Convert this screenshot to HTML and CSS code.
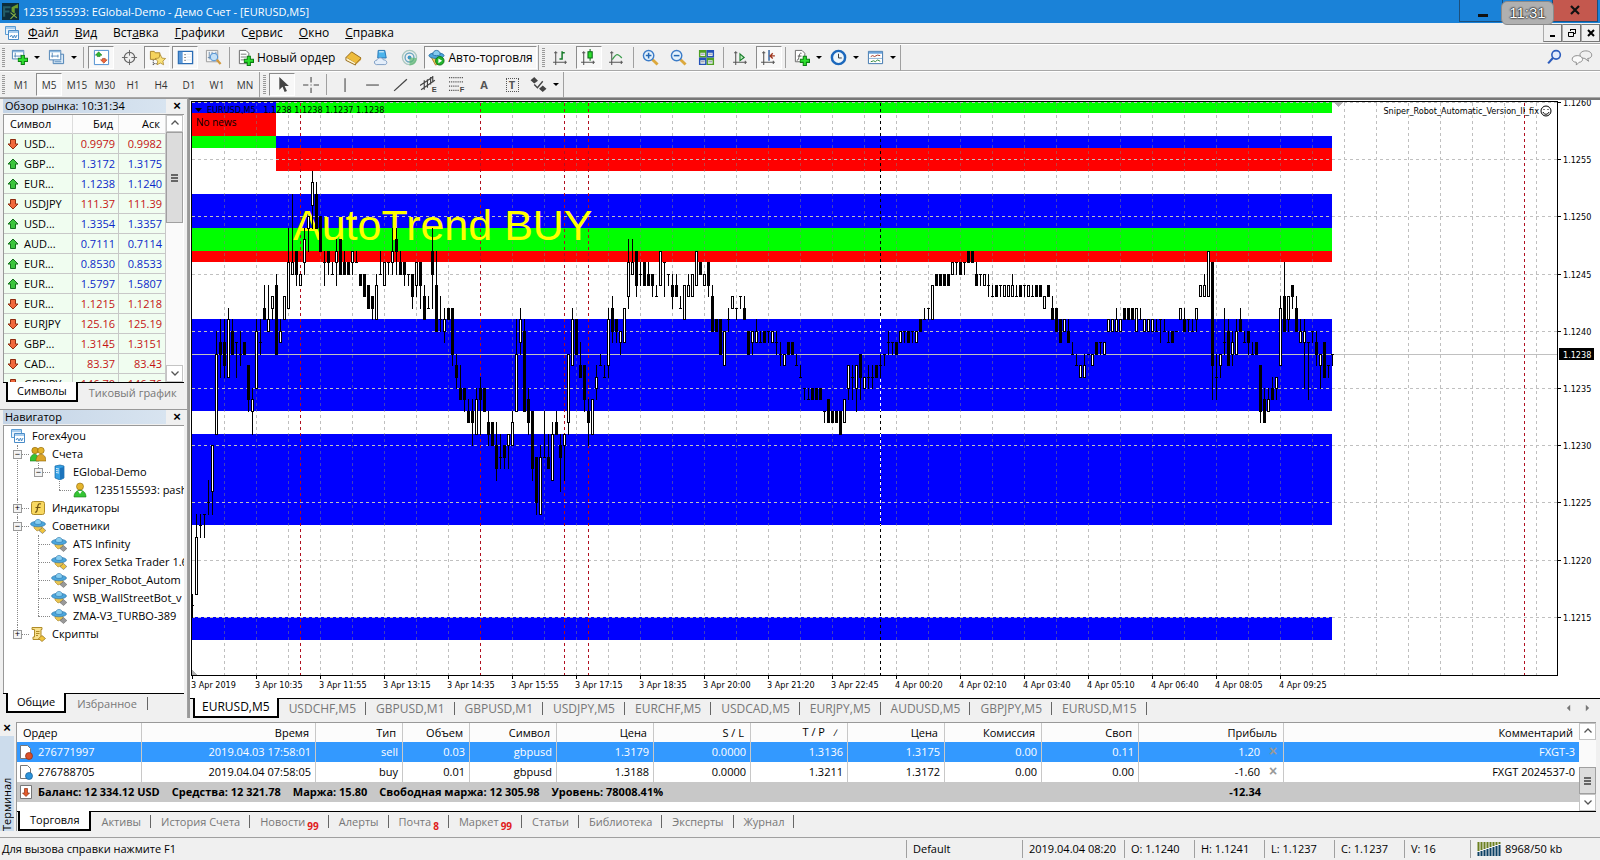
FILE: index.html
```html
<!DOCTYPE html>
<html lang="ru">
<head>
  <meta charset="UTF-8">
  <meta name="viewport" content="width=device-width, initial-scale=1.0">
  <title>1235155593: EGlobal-Demo - Демо Счет - [EURUSD,M5]</title>
  <link rel="stylesheet" href="styles.css">
</head>
<body>

  <!-- shared icons -->
  <svg class="sprite" aria-hidden="true">
    <symbol id="i-up" viewBox="0 0 12 12"><path d="M6 1l5 5H8.500v4.500h-5V6H1z" fill="#3cc43c" stroke="#14701c"/></symbol>
    <symbol id="i-down" viewBox="0 0 12 12"><path d="M6 11L1 6h2.500V1.500h5V6H11z" fill="#f0683c" stroke="#8c2c10"/></symbol>
    <symbol id="i-charts" viewBox="0 0 16 16"><path d="M1.500 1.500h10v8h-10z" fill="#e8f3fc" stroke="#5a9cd4"/><path d="M2 2h9v2H2z" fill="#a8cdee"/><path d="M4.500 5.500h10v9h-10z" fill="#fff" stroke="#4a8cc8"/><path d="M5 6h9v2H5z" fill="#a8cdee"/><path d="M6 12l1.500-2L9 13l1.500-3 1 3 1.500-3" fill="none" stroke="#4a8cc8"/></symbol>
    <symbol id="i-expert" viewBox="0 0 16 16"><path d="M4 7l8 0 0 4-5 2-3-3z" fill="#e9c450" stroke="#a5832a" stroke-width=".6"/><ellipse cx="8" cy="6" rx="7.500" ry="2.800" fill="#4ba6dc" stroke="#2a72a8" stroke-width=".6"/><path d="M4.500 5.500C4.500 0 11.500 0 11.500 5.500 9.500 6.800 6.500 6.800 4.500 5.500z" fill="#86cdf0" stroke="#2a72a8" stroke-width=".6"/><path d="M9 12.500l3.500-3 3.300 3-3.300 3z" fill="currentColor" stroke="#666" stroke-width=".6"/></symbol>
    <symbol id="i-plus" viewBox="0 0 10 10"><path d="M3.500.5h3v3h3v3h-3v3h-3v-3h-3v-3h3z" fill="#2ee02e" stroke="#0b7d12"/></symbol>
    <symbol id="i-axes" viewBox="0 0 16 16"><path d="M3.500 2v13M1 12.500h13M2 3.500h3M12.500 11v3" fill="none" stroke="#555"/></symbol>
    <symbol id="i-chev-up" viewBox="0 0 10 10"><path d="M1.500 6.500L5 3l3.500 3.500" fill="none" stroke="#555" stroke-width="1.300"/></symbol>
    <symbol id="i-chev-down" viewBox="0 0 10 10"><path d="M1.500 3.500L5 7l3.500-3.500" fill="none" stroke="#555" stroke-width="1.300"/></symbol>
  </svg>

  <header class="titlebar">
    <svg class="logo" viewBox="0 0 16 16"><path d="M0 0h16v16H0z" fill="#0c2c3c"/><path d="M1 3h7v2H3v2h4v2H3v4H1z" fill="#245c68"/><path d="M9 4l6-3v4h-3v5l-3-2z" fill="#6c9c30"/><path d="M8 9l6 5M13 10l-5 5" stroke="#8cb444"/></svg>
    <h1>1235155593: EGlobal-Demo - Демо Счет - [EURUSD,M5]</h1>
    <button class="win-min" aria-label="Свернуть"></button>
    <span class="clock">11:31</span>
    <button class="win-close" aria-label="Закрыть"><svg viewBox="0 0 10 10"><path d="M1 1l8 8M9 1L1 9" stroke="#111" stroke-width="2.200"/></svg></button>
  </header>

  <nav class="menubar">
    <svg class="ico"><use href="#i-charts"/></svg>
    <button><u>Ф</u>айл</button>
    <button><u>В</u>ид</button>
    <button>Вст<u>а</u>вка</button>
    <button><u>Г</u>рафики</button>
    <button>С<u>е</u>рвис</button>
    <button><u>О</u>кно</button>
    <button><u>С</u>правка</button>
    <div class="mdi">
      <button aria-label="Свернуть окно"><svg viewBox="0 0 10 10"><path d="M2 8h5" stroke="#000" stroke-width="2"/></svg></button>
      <button aria-label="Восстановить"><svg viewBox="0 0 10 10"><path d="M3.500 3V1.500h5v4H7M1.500 4.500h5v4h-5zM3 1.500h6M1 4.500h6" fill="none" stroke="#000"/></svg></button>
      <button aria-label="Закрыть окно"><svg viewBox="0 0 10 10"><path d="M2 2l6 6M8 2L2 8" stroke="#000" stroke-width="2"/></svg></button>
    </div>
  </nav>

  <div class="toolbar">
    <i class="grip"></i>
    <button class="tool drop" aria-label="Новый график"><svg viewBox="0 0 18 18"><path d="M1.500 1.500h12v9h-12z" fill="#fff" stroke="#4a80b4"/><path d="M2 2h11v1.500H2z" fill="#8cb8e0"/><path d="M4.500 4v5M3 7.500h8M10.500 6v3" stroke="#5a8cbc" fill="none"/><use href="#i-plus" x="7" y="6" width="11" height="11"/></svg></button>
    <button class="tool drop" aria-label="Профили"><svg viewBox="0 0 18 18"><path d="M5.500 5.500h11v10h-11z" fill="#d8e8f6" stroke="#4a80b4"/><path d="M1.500 1.500h12v10h-12z" fill="#fff" stroke="#4a80b4"/><path d="M2 2h11v1.500H2z" fill="#8cb8e0"/><path d="M4.500 4v5M3 7.500h8M10.500 6v3M7 13.500h7" stroke="#5a8cbc" fill="none"/></svg></button>
    <i class="sep"></i>
    <button class="tool on" aria-label="Обзор рынка"><svg viewBox="0 0 18 18"><path d="M1.500 1.500h15v15h-15z" fill="#fff" stroke="#4a8cd0"/><path d="M6 3l3.500 3.500H7.500V8h-3V6.500h-2z" fill="#2eb82e" stroke="#14701c" stroke-width=".6"/><path d="M11.500 15L8 11.500h2V10h3v1.500h2z" fill="#f0683c" stroke="#a03010" stroke-width=".6"/></svg></button>
    <button class="tool" aria-label="Окно данных"><svg viewBox="0 0 18 18"><circle cx="9" cy="9" r="5.500" fill="none" stroke="#666" stroke-width="1.300"/><path d="M9 1v6M9 11v6M1 9h6M11 9h6" stroke="#666"/></svg></button>
    <button class="tool on" aria-label="Навигатор"><svg viewBox="0 0 18 18"><path d="M1.500 2.500h4l1 1.500h5v7h-10z" fill="#f5d35c" stroke="#a8842a"/><path d="M4.500 12v5M5 15.500h3" stroke="#111" stroke-dasharray="1 1"/><path d="M12 6l1.700 3.600 3.900.5-2.900 2.700.8 3.900-3.500-1.900-3.500 1.900.8-3.900L6.400 10.100l3.900-.5z" fill="#fae27a" stroke="#a8842a" stroke-width=".8"/></svg></button>
    <button class="tool on" aria-label="Терминал"><svg viewBox="0 0 18 18"><path d="M1.500 2.500h15v13h-15z" fill="#fff" stroke="#2a6cb4" stroke-width="1.400"/><path d="M2 3h4v12H2z" fill="#5a98d8"/><path d="M8 6h1M8 9h1M8 12h1" stroke="#111"/><path d="M10 5.500h5M10 8.500h5M10 11.500h5" stroke="#dce8f4"/></svg></button>
    <button class="tool" aria-label="Тестер стратегий"><svg viewBox="0 0 18 18"><path d="M1.500 1.500h12v12h-12z" fill="#f4f4f4" stroke="#999"/><path d="M4.500 3v8M3 9h4M7.500 3v4M11.500 3v3" stroke="#6c8cac"/><circle cx="9.500" cy="8.500" r="4" fill="#c4e0f6" stroke="#4a8cd0"/><path d="M12.500 11.500l4 4.500" stroke="#d0983c" stroke-width="2.400"/></svg></button>
    <i class="sep"></i>
    <button class="tool text"><svg viewBox="0 0 18 18"><path d="M2.500 1.500h7l3 3v11h-10z" fill="#fff" stroke="#666"/><path d="M4 5.500h6M4 8.500h6M4 11.500h4" stroke="#777"/><use href="#i-plus" x="7" y="7" width="11" height="11"/></svg>Новый ордер</button>
    <button class="tool" aria-label="MetaEditor"><svg viewBox="0 0 18 18"><path d="M1 9l6-6 10 6.500-5.500 6z" fill="#eebc3c" stroke="#94681a"/><path d="M1 9v3l10 5 .5-2" fill="#fff2c4" stroke="#94681a"/><path d="M11.500 15.500L17 9.500v2L11 17z" fill="#c8922a"/></svg></button>
    <button class="tool" aria-label="MQL5"><svg viewBox="0 0 18 18"><path d="M5.500 1.500h7l1.500 8h-9z" fill="#4cb4ec" stroke="#2474b4"/><path d="M6.500 3h5" stroke="#fff"/><path d="M3.500 16.500c-3-.5-2.500-5 .5-4.500 1-3.500 6-3.500 7-.5 4-.5 5 5 1.500 5z" fill="#e4eefa" stroke="#7c9cc4"/></svg></button>
    <button class="tool" aria-label="Сигналы"><svg viewBox="0 0 18 18"><circle cx="9" cy="9" r="7.500" fill="none" stroke="#a8c8c0" stroke-width="1.400"/><circle cx="9" cy="9" r="4.700" fill="none" stroke="#6ca8c0" stroke-width="1.500"/><circle cx="9" cy="9" r="2" fill="#3c94c8"/><path d="M9 9v8.500c5-.5 8-3 7.500-8z" fill="#5cb870" opacity=".7"/></svg></button>
    <button class="tool text on"><svg viewBox="0 0 18 18"><path d="M3 8h12l-2 7-5 2z" fill="#ecca54" stroke="#a5832a"/><ellipse cx="9" cy="7" rx="8" ry="3" fill="#4ba6dc" stroke="#2a72a8"/><path d="M5 6c0-6 8-6 8 0-2 1.500-6 1.500-8 0z" fill="#86cdf0" stroke="#2a72a8"/><circle cx="12.500" cy="12.500" r="4.500" fill="#22b42c" stroke="#0c7414"/><path d="M11 10l4 2.500-4 2.500z" fill="#fff"/></svg>Авто-торговля</button>
    <i class="sep edge"></i>
    <i class="grip"></i>
    <button class="tool" aria-label="Бары"><svg viewBox="0 0 16 16"><use href="#i-axes"/><path d="M9.500 2v8M10 3.500h2M7 9.500h2" stroke="#157a28" stroke-width="1.400"/></svg></button>
    <button class="tool on" aria-label="Японские свечи"><svg viewBox="0 0 16 16"><use href="#i-axes"/><path d="M9.500 0v11" stroke="#0b6b18"/><path d="M7.500 2.500h4v6h-4z" fill="#2ee02e" stroke="#0b6b18"/></svg></button>
    <button class="tool" aria-label="Линия"><svg viewBox="0 0 16 16"><use href="#i-axes"/><path d="M4 10C8 4 9 4 13 8.500" fill="none" stroke="#3c9c4c" stroke-width="1.200"/></svg></button>
    <i class="sep"></i>
    <button class="tool" aria-label="Приблизить"><svg viewBox="0 0 18 18"><path d="M11 11l5.500 5.500" stroke="#dca83c" stroke-width="3"/><circle cx="7" cy="7" r="5.500" fill="#e4f2fc" stroke="#3c7cc8" stroke-width="1.500"/><path d="M4 7h6M7 4v6" stroke="#2468b4" stroke-width="1.600"/></svg></button>
    <button class="tool" aria-label="Отдалить"><svg viewBox="0 0 18 18"><path d="M11 11l5.500 5.500" stroke="#dca83c" stroke-width="3"/><circle cx="7" cy="7" r="5.500" fill="#e4f2fc" stroke="#3c7cc8" stroke-width="1.500"/><path d="M4 7h6" stroke="#2468b4" stroke-width="1.600"/></svg></button>
    <button class="tool" aria-label="Окна мозаикой"><svg viewBox="0 0 18 18"><path d="M1 1h8v8H1zM9 9h8v8H9z" fill="#4ea024"/><path d="M9 1h8v8H9zM1 9h8v8H1z" fill="#2452b8"/><path d="M2.500 4h5v3.500h-5zM10.500 4h5v3.500h-5zM2.500 12h5v3.500h-5zM10.500 12h5v3.500h-5z" fill="#e8f0e8"/><path d="M3 5.500h4M11 5.500h4M3 13.500h4M11 13.500h4" stroke="#88a"/></svg></button>
    <i class="sep"></i>
    <button class="tool" aria-label="Автопрокрутка"><svg viewBox="0 0 16 16"><use href="#i-axes"/><path d="M7.500 4.500l4 3.500-4 3z" fill="#b8ecb8" stroke="#157a28"/></svg></button>
    <button class="tool on" aria-label="Сдвиг графика"><svg viewBox="0 0 16 16"><use href="#i-axes"/><path d="M8.500 1v10" stroke="#24589c" stroke-width="1.300"/><path d="M14 6.500h-4M12 4l-2.500 2.500L12 9" fill="none" stroke="#a03820" stroke-width="1.300"/></svg></button>
    <i class="sep"></i>
    <button class="tool drop" aria-label="Индикаторы"><svg viewBox="0 0 18 18"><path d="M2.500 1.500h7l3 3v9h-10z" fill="#fff" stroke="#666"/><path d="M9 4.500c-2-.5-2 1-2.500 3S6 12 4 12M5 7.500h4" fill="none" stroke="#555"/><use href="#i-plus" x="7" y="7" width="11" height="11"/></svg></button>
    <button class="tool drop" aria-label="Периоды"><svg viewBox="0 0 18 18"><circle cx="9" cy="9" r="7" fill="#eef6fc" stroke="#1c68bc" stroke-width="2.600"/><path d="M9 5v4.500h3.500" fill="none" stroke="#333"/></svg></button>
    <button class="tool drop" aria-label="Шаблоны"><svg viewBox="0 0 18 18"><path d="M1.500 2.500h15v13h-15z" fill="#fff" stroke="#3c74ac"/><path d="M2 3h14v2H2z" fill="#6ca4dc"/><path d="M2 10h14" stroke="#8cb0d4"/><path d="M4 8l2-1 2 1 3-1.500 3 .5" fill="none" stroke="#9c3424"/><path d="M4 13.500l3-1 2 1 2-2 3 1.500" fill="none" stroke="#2c8434"/></svg></button>
    <i class="sep edge"></i>
    <div class="tool-right">
      <button class="tool" aria-label="Поиск"><svg viewBox="0 0 16 16"><circle cx="9.500" cy="5.500" r="4" fill="#e4ecfc" stroke="#2c5cbc" stroke-width="1.500"/><path d="M6.500 8.500L2 13.500" stroke="#2c5cbc" stroke-width="2"/></svg></button>
      <button class="tool" aria-label="Чат"><svg class="wide" viewBox="0 0 22 18"><path d="M15 2c8 0 8 8 2 8l1 3-4-3c-7 0-7-8 1-8z" fill="#f0f0f0" stroke="#888"/><path d="M6 7c7 0 7 7 2 7l-3 3v-3c-6 0-6-7 1-7z" fill="#fafafa" stroke="#888"/></svg></button>
    </div>
  </div>

  <div class="toolbar">
    <i class="grip"></i>
    <button class="tool period">M1</button>
    <button class="tool period on">M5</button>
    <button class="tool period">M15</button>
    <button class="tool period">M30</button>
    <button class="tool period">H1</button>
    <button class="tool period">H4</button>
    <button class="tool period">D1</button>
    <button class="tool period">W1</button>
    <button class="tool period">MN</button>
    <i class="sep edge"></i>
    <i class="grip"></i>
    <button class="tool on" aria-label="Курсор"><svg viewBox="0 0 16 16"><path d="M5 1v12l3-3 2 5 2.200-1-2.200-4.500h4z" fill="#444"/></svg></button>
    <button class="tool" aria-label="Перекрестие"><svg viewBox="0 0 16 16"><path d="M8.500 1v5M8.500 11v5M1 8.500h5M11 8.500h5M8 8.500h1" stroke="#444"/></svg></button>
    <i class="sep"></i>
    <button class="tool" aria-label="Вертикальная линия"><svg viewBox="0 0 16 16"><path d="M8.500 2v13" stroke="#444"/></svg></button>
    <button class="tool" aria-label="Горизонтальная линия"><svg viewBox="0 0 16 16"><path d="M2 8.500h12" stroke="#444"/></svg></button>
    <button class="tool" aria-label="Трендовая линия"><svg viewBox="0 0 16 16"><path d="M2 14L14 3" stroke="#444" stroke-width="1.200"/></svg></button>
    <button class="tool" aria-label="Канал"><svg viewBox="0 0 16 16"><path d="M0 9L12 1M1 13L14 4M4 4v9M7 3v8M10 1v7M12 0v6" stroke="#444" stroke-width="1.100"/><text x="11" y="15" class="glyph">E</text></svg></button>
    <button class="tool" aria-label="Фибоначчи"><svg viewBox="0 0 16 16"><path d="M1 1.500h14M1 5.500h14M1 9.500h9M1 13.500h9" stroke="#444" stroke-dasharray="1 1"/><text x="11" y="15" class="glyph">F</text></svg></button>
    <button class="tool letter" aria-label="Текст">A</button>
    <button class="tool letter" aria-label="Текстовая метка"><span>T</span></button>
    <button class="tool drop" aria-label="Стрелки"><svg viewBox="0 0 16 16"><path d="M4 1l3.500 3.500L4 7 .5 4zM12 15l-3.500-3L12 9l3.500 3z" fill="#444"/><path d="M4 8l3 3 5-6" fill="none" stroke="#444" stroke-width="1.300"/></svg></button>
    <i class="sep edge"></i>
  </div>

  <main class="workspace">
    <aside class="sidebar">
      <section class="panel market">
        <header class="panel-head"><h2>Обзор рынка: 10:31:34</h2><button class="close" aria-label="Закрыть">×</button></header>
        <div class="list">
          <table class="quotes">
            <colgroup><col class="q-symbol"><col class="q-bid"><col></colgroup>
            <thead><tr><th>Символ</th><th>Бид</th><th>Аск</th></tr></thead>
            <tbody>
              <tr class="down"><td><svg><use href="#i-down"/></svg>USD...</td><td>0.9979</td><td>0.9982</td></tr>
              <tr class="up"><td><svg><use href="#i-up"/></svg>GBP...</td><td>1.3172</td><td>1.3175</td></tr>
              <tr class="up"><td><svg><use href="#i-up"/></svg>EUR...</td><td>1.1238</td><td>1.1240</td></tr>
              <tr class="down"><td><svg><use href="#i-down"/></svg>USDJPY</td><td>111.37</td><td>111.39</td></tr>
              <tr class="up"><td><svg><use href="#i-up"/></svg>USD...</td><td>1.3354</td><td>1.3357</td></tr>
              <tr class="up"><td><svg><use href="#i-up"/></svg>AUD...</td><td>0.7111</td><td>0.7114</td></tr>
              <tr class="up"><td><svg><use href="#i-up"/></svg>EUR...</td><td>0.8530</td><td>0.8533</td></tr>
              <tr class="up"><td><svg><use href="#i-up"/></svg>EUR...</td><td>1.5797</td><td>1.5807</td></tr>
              <tr class="down"><td><svg><use href="#i-down"/></svg>EUR...</td><td>1.1215</td><td>1.1218</td></tr>
              <tr class="down"><td><svg><use href="#i-down"/></svg>EURJPY</td><td>125.16</td><td>125.19</td></tr>
              <tr class="down"><td><svg><use href="#i-down"/></svg>GBP...</td><td>1.3145</td><td>1.3151</td></tr>
              <tr class="down"><td><svg><use href="#i-down"/></svg>CAD...</td><td>83.37</td><td>83.43</td></tr>
              <tr class="down"><td><svg><use href="#i-down"/></svg>GBPJPY</td><td>146.70</td><td>146.76</td></tr>
            </tbody>
          </table>
          <div class="scroll">
            <button aria-label="Вверх"><svg><use href="#i-chev-up"/></svg></button>
            <div class="thumb"></div>
            <div class="track"></div>
            <button aria-label="Вниз"><svg><use href="#i-chev-down"/></svg></button>
          </div>
        </div>
        <nav class="tabs"><button class="active">Символы</button><button>Тиковый график</button></nav>
      </section>

      <section class="panel navigator">
        <header class="panel-head"><h2>Навигатор</h2><button class="close" aria-label="Закрыть">×</button></header>
        <div class="tree">
          <div class="node root"><svg class="ico"><use href="#i-charts"/></svg>Forex4you</div>
          <ul>
            <li>
              <div class="node"><button class="exp" aria-label="Свернуть">−</button><svg class="ico" viewBox="0 0 16 16"><circle cx="5" cy="4.500" r="3.200" fill="#d8a41c" stroke="#8c6408" stroke-width=".6"/><circle cx="11" cy="4.500" r="3.200" fill="#e4b42c" stroke="#8c6408" stroke-width=".6"/><path d="M0 15c0-9 9-9 9 0z" fill="#34c434" stroke="#187c18" stroke-width=".6"/><path d="M6 15c0-9 10-9 10 0z" fill="#dca428" stroke="#8c6408" stroke-width=".6"/></svg>Счета</div>
              <ul>
                <li>
                  <div class="node"><button class="exp" aria-label="Свернуть">−</button><svg class="ico" viewBox="0 0 16 16"><path d="M4 2l5-1 4 1v12l-4 2-5-2z" fill="#34a0e4" stroke="#1464a4" stroke-width=".7"/><path d="M9 4l4-1v11l-4 1.500z" fill="#1c74bc"/><path d="M5 4.500l3 .5M5 6.500l3 .5M5 8.500l3 .5" stroke="#d4ecfc"/></svg>EGlobal-Demo</div>
                  <ul>
                    <li><div class="node"><svg class="ico" viewBox="0 0 16 16"><circle cx="8" cy="4.500" r="3.500" fill="#e4b42c" stroke="#8c6408" stroke-width=".6"/><path d="M2 15c0-9 12-9 12 0z" fill="#34c434" stroke="#187c18" stroke-width=".6"/><path d="M6 9l2 3 2-3z" fill="#fff"/></svg>1235155593: pash</div></li>
                  </ul>
                </li>
              </ul>
            </li>
            <li><div class="node"><button class="exp" aria-label="Развернуть">+</button><svg class="ico" viewBox="0 0 16 16"><rect x="1.500" y="1.500" width="13" height="13" rx="2" fill="#f8d860" stroke="#b08c28"/><path d="M11 4c-3-1-3 1-3.500 4S7 12.500 5 12M5.500 7.500h5" fill="none" stroke="#6c5010" stroke-width="1.200"/></svg>Индикаторы</div></li>
            <li>
              <div class="node"><button class="exp" aria-label="Свернуть">−</button><svg class="ico gold"><use href="#i-expert"/></svg>Советники</div>
              <ul>
                <li><div class="node"><svg class="ico"><use href="#i-expert"/></svg>ATS Infinity</div></li>
                <li><div class="node"><svg class="ico gold"><use href="#i-expert"/></svg>Forex Setka Trader 1.6</div></li>
                <li><div class="node"><svg class="ico"><use href="#i-expert"/></svg>Sniper_Robot_Autom</div></li>
                <li><div class="node"><svg class="ico"><use href="#i-expert"/></svg>WSB_WallStreetBot_v</div></li>
                <li><div class="node"><svg class="ico"><use href="#i-expert"/></svg>ZMA-V3_TURBO-389</div></li>
              </ul>
            </li>
            <li><div class="node"><button class="exp" aria-label="Развернуть">+</button><svg class="ico" viewBox="0 0 16 16"><path d="M2 1.500h10v2H11v7h2v3H3v-2.500h1.500v-7.500H2z" fill="#f8e08c" stroke="#b08c28"/><path d="M6 5.500h3.500M6 7.500h3.500M6 9.500h2" stroke="#b08c28"/><path d="M8.500 12.500l3.500-3 3.500 3-3.500 3z" fill="#f0c43c" stroke="#94701c" stroke-width=".7"/></svg>Скрипты</div></li>
          </ul>
        </div>
        <nav class="tabs"><button class="active">Общие</button><button>Избранное</button></nav>
      </section>
    </aside>

    <section class="chart-window">
      <div class="chart" id="chart"></div>
      <nav class="tabs">
        <button class="active">EURUSD,M5</button>
        <button>USDCHF,M5</button>
        <button>GBPUSD,M1</button>
        <button>GBPUSD,M1</button>
        <button>USDJPY,M5</button>
        <button>EURCHF,M5</button>
        <button>USDCAD,M5</button>
        <button>EURJPY,M5</button>
        <button>AUDUSD,M5</button>
        <button>GBPJPY,M5</button>
        <button>EURUSD,M15</button>
        <div class="tab-scroll">
          <svg viewBox="0 0 6 8"><path d="M5 0v8L1 4z" fill="#777"/></svg>
          <svg viewBox="0 0 6 8"><path d="M1 0v8l4-4z" fill="#777"/></svg>
        </div>
      </nav>
    </section>
  </main>

  <section class="terminal">
    <div class="side"><button class="close" aria-label="Закрыть">×</button><h2>Терминал</h2></div>
    <div class="terminal-body">
      <div class="list">
        <table class="orders">
          <colgroup>
            <col class="c-order"><col class="c-time"><col class="c-type"><col class="c-lots"><col class="c-type">
            <col class="c-num"><col class="c-num"><col class="c-num"><col class="c-num"><col class="c-num"><col class="c-num">
            <col class="c-profit"><col>
          </colgroup>
          <thead>
            <tr><th>Ордер</th><th>Время</th><th>Тип</th><th>Объем</th><th>Символ</th><th>Цена</th><th>S / L</th><th class="sorted">T / P <i>∕</i></th><th>Цена</th><th>Комиссия</th><th>Своп</th><th>Прибыль</th><th>Комментарий</th></tr>
          </thead>
          <tbody>
            <tr class="selected"><td><svg viewBox="0 0 14 16"><path d="M1.500 1.500h7l3 3v10h-10z" fill="#fff" stroke="#777"/><circle cx="10" cy="12" r="3.500" fill="#dc5028" stroke="#8c2c10" stroke-width=".7"/></svg>276771997</td><td>2019.04.03 17:58:01</td><td>sell</td><td>0.03</td><td>gbpusd</td><td>1.3179</td><td>0.0000</td><td>1.3136</td><td>1.3175</td><td>0.00</td><td>0.11</td><td>1.20<button class="kill" aria-label="Закрыть ордер">×</button></td><td>FXGT-3</td></tr>
            <tr><td><svg viewBox="0 0 14 16"><path d="M1.500 1.500h7l3 3v10h-10z" fill="#fff" stroke="#777"/><circle cx="10" cy="12" r="3.500" fill="#2c94dc" stroke="#145c94" stroke-width=".7"/></svg>276788705</td><td>2019.04.04 07:58:05</td><td>buy</td><td>0.01</td><td>gbpusd</td><td>1.3188</td><td>0.0000</td><td>1.3211</td><td>1.3172</td><td>0.00</td><td>0.00</td><td>-1.60<button class="kill" aria-label="Закрыть ордер">×</button></td><td>FXGT 2024537-0</td></tr>
            <tr class="balance"><td colspan="11"><svg viewBox="0 0 14 16"><path d="M1.500 1.500h11v13h-11z" fill="#fff" stroke="#777"/><path d="M7 12.500L3.500 9h2V4.500h3V9h2z" fill="#e45c2c" stroke="#8c2c10" stroke-width=".7"/></svg><span>Баланс: 12 334.12 USD</span><span>Средства: 12 321.78</span><span>Маржа: 15.80</span><span>Свободная маржа: 12 305.98</span><span>Уровень: 78008.41%</span></td><td>-12.34</td><td></td></tr>
          </tbody>
        </table>
        <div class="scroll">
          <button aria-label="Вверх"><svg><use href="#i-chev-up"/></svg></button>
          <div class="track"></div>
          <div class="thumb"></div>
          <button aria-label="Вниз"><svg><use href="#i-chev-down"/></svg></button>
        </div>
      </div>
      <nav class="tabs">
        <button class="active">Торговля</button>
        <button>Активы</button>
        <button>История Счета</button>
        <button>Новости<sub>99</sub></button>
        <button>Алерты</button>
        <button>Почта<sub>8</sub></button>
        <button>Маркет<sub>99</sub></button>
        <button>Статьи</button>
        <button>Библиотека</button>
        <button>Эксперты</button>
        <button>Журнал</button>
      </nav>
    </div>
  </section>

  <footer class="statusbar">
    <span class="hint">Для вызова справки нажмите F1</span>
    <span class="s-profile">Default</span>
    <span class="s-time">2019.04.04 08:20</span>
    <span class="s-price">O: 1.1240</span>
    <span class="s-price">H: 1.1241</span>
    <span class="s-price">L: 1.1237</span>
    <span class="s-price">C: 1.1237</span>
    <span class="s-volume">V: 16</span>
    <span class="s-net"><svg viewBox="0 0 24 14"><path d="M1.500 0v9M4.500 0v8M7.500 0v7M10.500 0v6M13.500 0v5M16.500 0v4M19.500 0v3M22.500 0v2" stroke="#6c8020" stroke-width="2"/><path d="M1.500 10v4M4.500 9v5M7.500 8v6M10.500 7v7M13.500 6v8M16.500 5v9M19.500 4v10M22.500 3v11" stroke="#0c4064" stroke-width="2"/></svg>8968/50 kb</span>
  </footer>

  <script src="script.js"></script>
</body>
</html>
```
FILE: styles.css
```css
* {
  box-sizing: border-box;
}
body {
  margin: 0;
  height: 100vh;
  display: flex;
  flex-direction: column;
  overflow: hidden;
  background: #f0f0f0;
  color: #000;
  font: 11px/18px "Open Sans", "Noto Sans", sans-serif;
}
button {
  font: inherit;
  color: inherit;
  background: none;
  border: 0;
  padding: 0;
  white-space: nowrap;
}
h1, h2 {
  margin: 0;
  font-size: 11px;
  font-weight: normal;
  white-space: nowrap;
}
table {
  border-collapse: separate;
  border-spacing: 0;
  table-layout: fixed;
}
th {
  font-weight: normal;
}
.sprite {
  display: none;
}
.ico {
  width: 16px;
  height: 16px;
  flex: none;
}

/* title and menu */
.titlebar {
  display: flex;
  align-items: flex-start;
  height: 23px;
  flex: none;
  padding: 0 2px;
  background: #1a82d8;
  color: #fff;
}
.logo {
  width: 17px;
  height: 17px;
  margin: 3px 4px 0 0;
}
.titlebar h1 {
  flex: 1;
  line-height: 24px;
}
.win-min, .win-close {
  height: 22px;
  border: 1px solid #1c4f7c;
  border-top: 0;
}
.win-min {
  width: 44px;
}
.win-min::after {
  content: "";
  display: block;
  width: 10px;
  height: 3px;
  margin: 9px 0 0 18px;
  background: #111;
}
.clock {
  z-index: 1;
  margin: 1px -2px 0 -2px;
  width: 53px;
  height: 24px;
  border-radius: 6px;
  border: 1px solid #8a8a8a;
  background: #b0b0b0;
  font: 15px/22px "Liberation Sans", sans-serif;
  text-align: center;
  text-shadow: 0 0 2px #000, 0 0 2px #222, 0 0 1px #222;
}
.win-close {
  width: 46px;
  background: #c4584e;
}
.win-close svg {
  width: 10px;
  height: 10px;
}
.menubar {
  display: flex;
  align-items: center;
  height: 21px;
  flex: none;
  padding-left: 4px;
  border-bottom: 1px solid #a0a0a0;
}
.menubar > button {
  padding: 0 8px;
  font-size: 12px;
}
.mdi {
  display: flex;
  margin-left: auto;
}
.mdi button {
  width: 19px;
  height: 18px;
  border: 1px solid #777;
  border-left-color: #aaa;
  line-height: 10px;
}
.mdi svg {
  width: 10px;
  height: 10px;
}

/* toolbars */
.toolbar {
  display: flex;
  align-items: center;
  height: 27px;
  flex: none;
  padding-left: 2px;
  border-top: 1px solid #fff;
  border-bottom: 1px solid #a8a8a8;
}
.grip {
  width: 3px;
  height: 20px;
  margin-right: 2px;
  background: repeating-linear-gradient(#999 0 1px, #f0f0f0 1px 2px);
}
.sep {
  width: 1px;
  height: 21px;
  margin: 0 3px 0 2px;
  background: #a0a0a0;
}
.sep.edge {
  height: 26px;
  margin: 0 3px 0 0;
}
.tool {
  display: flex;
  align-items: center;
  justify-content: center;
  min-width: 26px;
  height: 23px;
  margin: 0 1px;
}
.tool svg {
  width: 17px;
  height: 17px;
  flex: none;
}
.tool svg.wide {
  width: 22px;
}
.tool.on {
  background: #f8f8f8;
  border: 1px solid #fff;
  border-top-color: #8c8c8c;
  border-left-color: #8c8c8c;
}
.tool.drop {
  min-width: 35px;
}
.tool.drop::after {
  content: "";
  margin-left: 6px;
  border: 3px solid transparent;
  border-top-color: #000;
  border-bottom: 0;
}
.tool.text {
  gap: 3px;
  padding: 0 3px;
  font-size: 12px;
}
.tool-right {
  display: flex;
  margin-left: auto;
  padding-right: 4px;
}
.period {
  font-size: 10px;
  color: #333;
}
.letter {
  font-weight: bold;
  color: #555;
}
.letter span {
  width: 13px;
  line-height: 12px;
  border: 1px dotted #555;
}
.glyph {
  font: bold 7px "Liberation Sans", sans-serif;
  fill: #444;
}

/* workspace */
.workspace {
  display: flex;
  flex: 1;
  min-height: 0;
}
.sidebar {
  width: 188px;
  flex: none;
  display: flex;
  flex-direction: column;
  border-right: 1px solid #a0a0a0;
}
.panel {
  display: flex;
  flex-direction: column;
  padding: 0 3px 5px 3px;
  border-top: 1px solid #999;
}
.market {
  height: 311px;
  padding-bottom: 7px;
}
.navigator {
  flex: 1;
  min-height: 0;
}
.panel-head {
  display: flex;
  height: 14px;
  margin-bottom: 1px;
  align-items: center;
}
.panel-head h2 {
  flex: 1;
  padding-left: 2px;
  line-height: 14px;
  background: linear-gradient(to right, #c4d4e6, #d8e4f0);
}
.close {
  width: 14px;
  margin-left: 4px;
  font: bold 13px/12px "Liberation Sans", sans-serif;
}
.list {
  display: flex;
  overflow: hidden;
  background: #fff;
}
.panel .list, .tree {
  flex: 1;
  min-height: 0;
  overflow: hidden;
  border: 1px solid #999;
  border-right: 0;
  border-bottom: 0;
}
.quotes {
  width: 162px;
  height: 0;
}
.q-symbol {
  width: 69px;
}
.q-bid {
  width: 46px;
}
.quotes th {
  height: 19px;
  padding: 0 5px;
  background: #fcfcfc;
  border-right: 1px solid #ddd;
  border-bottom: 1px solid #ccc;
  text-align: right;
}
.quotes th:first-child {
  text-align: left;
  padding-left: 6px;
}
.quotes td {
  height: 20px;
  padding: 0 3px 0 0;
  background: #f0fdf0;
  border-right: 1px solid #c8c8c8;
  border-bottom: 1px solid #c8c8c8;
  text-align: right;
  white-space: nowrap;
}
.quotes td:first-child {
  padding-left: 3px;
  text-align: left;
}
.quotes td svg {
  width: 12px;
  height: 12px;
  margin-right: 5px;
  vertical-align: -2px;
}
.up td + td {
  color: #0a28c8;
}
.down td + td {
  color: #c41414;
}
.scroll {
  display: flex;
  flex-direction: column;
  flex: none;
  width: 17px;
  background: #fafafa;
}
.scroll button {
  height: 17px;
  line-height: 10px;
  background: #fff;
  border: 1px solid #c4c4c4;
}
.scroll svg {
  width: 10px;
  height: 10px;
}
.thumb {
  height: 91px;
  background: #dcdcdc;
  border: 1px solid #a0a0a0;
  display: flex;
  align-items: center;
  justify-content: center;
}
.thumb::after {
  content: "";
  width: 7px;
  height: 8px;
  background: repeating-linear-gradient(#666 0 2px, #dcdcdc 2px 3px);
}
.track {
  flex: 1;
}

/* tab strips */
.tabs {
  display: flex;
  flex: none;
  height: 20px;
  padding-left: 3px;
  border-top: 1px solid #000;
  color: #777;
}
.tabs button {
  position: relative;
  padding: 0 11px;
}
.tabs button:not(.active)::after {
  content: "";
  position: absolute;
  right: 0;
  top: 3px;
  height: 13px;
  border-right: 1px solid #666;
}
.tabs .active {
  margin-top: -1px;
  padding: 0 9px;
  color: #000;
  background: #fff;
  border: 1px solid #000;
  border-width: 0 2px 2px;
}
.tabs sub {
  margin-left: 2px;
  font-size: 10px;
  line-height: 9px;
  vertical-align: -4px;
  font-weight: bold;
  color: #e02020;
}
.market .tabs button:not(.active)::after {
  border: 0;
}
.tab-scroll {
  display: flex;
  gap: 14px;
  margin-left: auto;
  padding: 5px 10px 0 0;
}
.tab-scroll svg {
  width: 5px;
  height: 8px;
}

/* navigator tree */
.tree {
  background: #fff;
  padding-top: 1px;
}
.tree ul {
  list-style: none;
  margin: 0;
  padding: 0 0 0 21px;
}
.tree > ul {
  padding-left: 13px;
}
.tree li {
  position: relative;
}
.tree li::before {
  content: "";
  position: absolute;
  top: 0;
  left: 0;
  height: 100%;
  border-left: 1px dotted #888;
}
.tree li:last-child::before {
  height: 9px;
}
.node {
  display: flex;
  align-items: center;
  height: 18px;
  gap: 6px;
  white-space: nowrap;
}
.node .ico {
  color: #999;
}
.node .gold {
  color: #f0c43c;
}
.node.root {
  padding-left: 6px;
}
li > .node::before {
  content: "";
  flex: none;
  width: 12px;
  margin-right: -5px;
  border-top: 1px dotted #888;
}
.exp {
  position: absolute;
  left: -4px;
  width: 9px;
  height: 9px;
  background: #f4f4f4;
  border: 1px solid #999;
  font: 9px/7px "Liberation Sans", sans-serif;
}

/* chart */
.chart-window {
  flex: 1;
  min-width: 0;
  display: flex;
  flex-direction: column;
  background: #fff;
  border-top: 2px solid #777;
  border-left: 2px solid #999;
}
.chart {
  flex: 1;
  min-height: 0;
  overflow: hidden;
}
.chart svg {
  display: block;
  width: 100%;
  height: 100%;
}
.chart text {
  font: 9px "DejaVu Sans Condensed", "DejaVu Sans", sans-serif;
}
.chart .news {
  font: 10px "Open Sans", sans-serif;
}
.chart .trend {
  font: 43px "Liberation Sans", Arial, sans-serif;
  fill: #ffff00;
}
.chart .now {
  fill: #fff;
}
.chart-window .tabs {
  background: #f0f0f0;
  font-size: 12px;
}
.chart-window .tabs button {
  padding: 0 10px;
}
.chart-window .tabs .active {
  padding: 0 7px;
}

/* terminal */
.terminal {
  display: flex;
  flex: none;
  padding: 4px 4px 6px 0;
  border-bottom: 1px solid #a0a0a0;
}
.side {
  width: 16px;
  flex: none;
  display: flex;
  flex-direction: column;
  align-items: flex-start;
}
.side .close {
  margin: 0;
}
.side h2 {
  flex: 1;
  margin-top: 2px;
  width: 14px;
  line-height: 14px;
  writing-mode: vertical-rl;
  transform: rotate(180deg);
  background: #ccdcec;
}
.terminal-body {
  flex: 1;
  min-width: 0;
  border-top: 1px solid #999;
  border-left: 1px solid #999;
}
.orders {
  flex: 1;
  width: 0;
  height: 79px;
  margin-bottom: 9px;
}
.c-order { width: 125px; }
.c-time { width: 174px; }
.c-type { width: 87px; }
.c-lots { width: 67px; }
.c-num { width: 97px; }
.c-profit { width: 145px; }
.orders th, .orders td {
  height: 20px;
  padding: 0 4px;
  text-align: right;
  white-space: nowrap;
  border-right: 1px solid #c8c8c8;
}
.orders th {
  height: 19px;
  padding: 0 6px;
  background: #fcfcfc;
}
.orders th:first-child, .orders td:first-child {
  text-align: left;
}
.orders td:first-child {
  padding-left: 2px;
}
.orders td svg {
  width: 14px;
  height: 16px;
  margin-right: 5px;
  vertical-align: -4px;
}
.orders th:last-child, .orders td:last-child {
  border-right: 0;
}
.sorted i {
  font-size: 9px;
  margin: 0 4px 0 6px;
}
.selected td {
  background: #3399ff;
  color: #fff;
}
.kill {
  width: 8px;
  margin: 0 2px 0 9px;
  font: bold 14px/14px "Liberation Sans", sans-serif;
  color: #999;
}
.balance td {
  background: #c8c8c8;
  border: 0;
  font-weight: bold;
}
.balance span {
  margin-right: 12px;
}
.balance td:nth-child(2) {
  padding-right: 23px;
}
.terminal .scroll .thumb {
  height: 27px;
}
.terminal .tabs {
  padding-left: 1px;
}
.terminal .tabs button {
  padding: 0 10px;
}

/* status bar */
.statusbar {
  display: flex;
  align-items: center;
  height: 22px;
  flex: none;
}
.statusbar span {
  padding-left: 6px;
  line-height: 18px;
  border-left: 1px solid #a0a0a0;
  white-space: nowrap;
}
.statusbar .hint {
  flex: 1;
  padding-left: 2px;
  border: 0;
}
.s-profile { width: 116px; }
.s-time { width: 102px; }
.s-price { width: 70px; }
.s-volume { width: 66px; }
.s-net {
  width: 130px;
  display: flex;
  align-items: center;
  gap: 4px;
}
.s-net svg {
  width: 24px;
  height: 14px;
}
```
FILE: script.js
```javascript
// Candles, oldest first: [high, low, body top, body bottom, type].
// Values are pips below 1.1260. Type: 1 = hollow, 0 = filled, body with equal ends = doji.
const candles = [
  [43,45,44,44,0],[36,43,38,43,1],[36,38,37,37,0],[36,38,36,36,0],[33,36,35,35,0],[30,36,30,34,1],
  [20,29,22,29,1],[19,24,21,22,0],[19,24,21,23,0],[18,24,19,24,1],[19,22,20,22,0],[21,24,21,21,0],
  [20,23,22,22,0],[21,22,21,22,0],[23,27,23,26,0],[25,29,26,27,1],[19,25,20,25,1],[19,22,21,21,0],
  [16,19,18,19,0],[16,20,19,20,1],[17,19,17,18,1],[15,22,16,22,0],[19,21,20,21,1],[17,19,17,19,1],
  [11,18,14,18,1],[8,15,14,15,1],[13,16,13,15,0],[15,16,15,16,1],[11,15,12,14,1],[10,13,10,11,1],
  [6,11,7,9,1],[7,11,8,11,0],[10,13,10,13,0],[13,16,14,14,0],[13,15,13,14,0],[14,15,15,15,0],
  [12,16,13,14,1],[12,15,12,15,0],[13,15,14,15,0],[14,15,14,15,0],[13,15,13,14,1],[13,14,14,14,0],
  [15,16,15,16,0],[15,17,15,17,0],[16,18,16,18,0],[17,19,17,18,0],[15,19,16,19,1],[13,15,15,15,0],
  [14,16,14,16,1],[14,15,14,14,0],[11,15,13,14,1],[11,15,12,13,0],[13,15,14,15,0],[14,16,14,15,0],
  [15,16,15,15,0],[15,18,15,17,0],[14,17,14,16,1],[14,18,14,16,0],[16,19,17,19,0],[17,18,18,18,0],
  [11,18,13,15,0],[13,20,16,20,0],[17,20,19,19,0],[18,21,19,20,1],[18,19,18,19,0],[18,23,18,22,0],
  [22,25,23,24,0],[23,26,25,26,0],[25,27,25,26,0],[26,28,27,28,0],[26,30,27,28,0],[25,29,26,29,1],
  [24,29,25,26,0],[25,27,25,27,0],[27,30,28,29,0],[28,30,28,30,0],[28,33,30,32,0],[29,32,31,31,0],
  [30,32,30,31,0],[29,32,29,30,1],[27,30,28,30,1],[19,27,22,27,1],[18,22,19,21,1],[19,27,20,27,0],
  [25,29,26,28,0],[27,33,27,32,0],[31,36,31,35,0],[30,36,31,36,1],[27,31,31,31,0],[29,32,31,32,0],
  [28,33,29,33,1],[27,29,28,29,0],[29,34,30,31,0],[29,33,29,30,1],[22,29,22,28,1],[18,23,19,23,1],
  [19,22,19,22,0],[21,24,23,24,0],[23,27,23,26,0],[26,30,27,28,0],[26,29,26,29,1],[23,26,24,25,1],
  [22,23,23,23,0],[23,24,24,24,0],[18,24,19,23,1],[17,21,18,20,0],[19,21,19,20,0],[20,22,20,21,1],
  [18,21,18,21,1],[12,18,14,17,1],[12,15,14,15,1],[13,17,13,16,0],[14,16,15,15,0],[14,16,14,16,0],
  [14,16,15,16,0],[15,17,15,16,0],[16,17,17,17,0],[13,16,13,16,1],[14,17,14,14,0],[15,16,15,15,0],
  [15,18,16,17,0],[15,17,16,17,0],[17,18,18,18,0],[16,19,16,19,1],[15,17,16,17,1],[15,17,15,17,1],
  [13,16,13,16,1],[14,15,14,15,0],[15,16,15,16,1],[14,17,14,16,0],[16,20,17,20,0],[19,20,19,20,0],
  [19,22,19,22,0],[20,23,20,23,1],[18,20,19,19,0],[17,18,17,18,1],[18,19,18,18,0],[17,18,17,17,0],
  [17,19,18,19,0],[20,22,20,22,0],[20,22,20,21,1],[19,21,20,21,1],[20,21,21,21,0],[20,21,20,21,0],
  [20,21,20,20,0],[20,21,20,21,1],[20,22,21,21,0],[21,23,22,22,0],[22,23,22,23,1],[21,22,21,22,0],
  [21,22,21,22,0],[22,23,23,23,0],[23,24,24,24,0],[25,26,25,25,0],[25,26,26,26,0],[25,26,25,26,0],
  [25,26,25,26,0],[25,26,25,26,0],[27,28,27,27,0],[26,28,26,28,0],[27,28,27,28,0],[27,28,27,28,0],
  [27,29,27,29,0],[26,28,26,28,1],[23,26,23,25,1],[23,26,24,24,0],[23,27,23,25,1],[22,26,22,24,0],
  [24,25,24,25,1],[23,25,24,24,0],[23,25,24,24,0],[23,24,23,24,0],[22,24,23,23,0],[22,23,22,22,0],
  [20,22,21,21,0],[21,22,21,21,0],[21,22,21,22,0],[20,21,20,21,1],[20,21,20,20,0],[20,21,20,21,0],
  [20,21,20,20,0],[20,21,20,21,1],[19,20,19,20,0],[18,19,19,19,0],[18,19,18,18,0],[16,19,16,19,1],
  [15,16,15,16,0],[15,16,15,16,0],[15,16,15,16,0],[15,16,15,16,0],[14,15,14,15,1],[14,15,14,14,0],
  [14,15,14,15,0],[14,15,14,14,0],[13,14,13,14,0],[13,14,13,14,0],[14,16,15,16,0],[15,16,15,15,0],
  [15,16,15,16,1],[15,17,16,16,0],[16,17,17,17,0],[16,17,16,17,0],[16,17,16,16,0],[16,17,16,17,1],
  [16,17,16,17,1],[15,17,16,17,1],[16,17,17,17,0],[16,17,16,17,0],[16,17,16,16,0],[16,17,16,17,1],
  [16,17,17,17,0],[16,17,16,17,0],[16,17,16,17,0],[17,18,17,18,1],[16,17,16,17,0],[17,19,18,19,0],
  [18,20,18,20,0],[19,21,19,21,0],[19,20,19,20,1],[19,21,20,21,0],[21,22,22,22,0],[22,23,23,23,0],
  [23,24,23,24,1],[22,24,23,24,1],[22,22,22,22,0],[22,23,22,23,1],[21,22,21,22,0],[21,22,21,21,0],
  [21,22,21,22,1],[19,20,19,20,1],[19,20,19,20,1],[18,20,19,20,1],[19,20,19,20,1],[18,19,18,19,0],
  [18,19,18,19,0],[18,19,18,19,0],[18,20,18,20,1],[18,19,19,19,0],[19,20,19,20,1],[19,20,19,20,1],
  [19,20,19,20,1],[19,20,20,20,0],[19,21,19,19,0],[19,20,20,20,0],[20,21,21,21,0],[20,21,20,21,0],
  [20,20,20,20,0],[18,19,18,19,1],[18,20,19,20,0],[19,20,19,19,0],[19,20,20,20,0],[18,20,18,19,1],
  [16,17,16,17,1],[15,17,16,17,1],[13,17,13,17,1],[14,26,14,23,0],[22,26,24,24,0],[22,24,22,23,1],
  [18,22,21,21,0],[19,23,20,23,0],[20,23,21,22,1],[19,22,20,22,1],[18,20,19,20,0],[20,21,21,21,0],
  [20,22,20,21,0],[21,22,22,22,0],[21,22,21,22,0],[23,28,23,27,0],[25,28,26,28,0],[25,27,26,27,1],
  [24,26,25,26,0],[24,26,24,25,1],[17,23,18,23,1],[14,20,17,20,0],[17,20,17,19,1],[16,18,16,17,0],
  [17,20,18,20,0],[19,21,20,21,1],[19,25,20,21,1],[21,26,21,21,0],[20,21,20,20,0],[20,23,21,22,0],
  [22,25,22,23,1],[21,24,21,24,0],[23,24,23,23,0],[22,23,22,22,0]
];

// Zones: [from pip, to pip, from x, to x, colour]
const LEFT = 2;
const SPLIT = 86;
const ZONES_END = 1142;
const zones = [
  [0, 1, LEFT, SPLIT, '#0000ff'], [0, 1, SPLIT, ZONES_END, '#00ff00'],
  [1, 3, LEFT, SPLIT, '#ff0000'], [3, 4, LEFT, SPLIT, '#00ff00'],
  [3, 4, SPLIT, ZONES_END, '#0000ff'], [4, 6, SPLIT, ZONES_END, '#ff0000'],
  [8, 11, LEFT, ZONES_END, '#0000ff'], [11, 13, LEFT, ZONES_END, '#00ff00'],
  [13, 14, LEFT, ZONES_END, '#ff0000'], [19, 27, LEFT, ZONES_END, '#0000ff'],
  [29, 37, LEFT, ZONES_END, '#0000ff'], [45, 47, LEFT, ZONES_END, '#0000ff']
];

const times = ['3 Apr 2019', '3 Apr 10:35', '3 Apr 11:55', '3 Apr 13:15', '3 Apr 14:35', '3 Apr 15:55',
  '3 Apr 17:15', '3 Apr 18:35', '3 Apr 20:00', '3 Apr 21:20', '3 Apr 22:45', '4 Apr 00:20',
  '4 Apr 02:10', '4 Apr 03:40', '4 Apr 05:10', '4 Apr 06:40', '4 Apr 08:05', '4 Apr 09:25'];

const newsLines = [110, 290, 374, 398, 1334];
const chartEl = document.getElementById('chart');

const y = pip => Math.round(2 + pip * 11.44);
const hLine = (x1, x2, yy, attrs) => `<path d="M${x1} ${yy + 0.5}H${x2}" ${attrs}/>`;
const vLine = (xx, y1, y2, attrs) => `<path d="M${xx + 0.5} ${y1}V${y2}" ${attrs}/>`;

const draw = () => {
  const right = chartEl.clientWidth - 43;
  const bottom = chartEl.clientHeight - 23;
  let out = '<g shape-rendering="crispEdges" fill="none">';

  zones.forEach(([a, b, x1, x2, color]) => {
    out += `<rect x="${x1}" y="${y(a)}" width="${x2 - x1}" height="${y(b) - y(a)}" fill="${color}"/>`;
  });

  // grid
  for (let x = 34; x < right; x += 32) {
    out += vLine(x, 3, bottom, 'stroke="#808080" stroke-opacity=".5" stroke-dasharray="3 3"');
  }
  for (let pip = 0; pip <= 45; pip += 5) {
    out += hLine(LEFT, right, y(pip), 'stroke="#c0c0c0" stroke-dasharray="3 3"');
  }
  newsLines.forEach(x => {
    out += vLine(x, 3, bottom, 'stroke="#b01020" stroke-dasharray="3 3"');
  });
  out += vLine(690, 3, bottom, 'stroke="#000" stroke-dasharray="3 3"');
  out += vLine(690, y(19), y(27), 'stroke="#fff" stroke-dasharray="3 3"');
  out += vLine(690, y(29), y(37), 'stroke="#fff" stroke-dasharray="3 3"');
  out += hLine(LEFT, right, y(22), 'stroke="#c0c0c0"');
  out += '</g>';

  out += `<text class="trend" x="103" y="140">AutoTrend BUY</text>`;

  // candles, 4px apart
  let black = '';
  let white = '';
  candles.forEach(([high, low, top, end, hollow], i) => {
    const x = 2 + i * 4;
    const h = y(end) - y(top) + 1;
    black += `M${x} ${y(high)}h1v${y(low) - y(high) + 1}h-1z`;
    black += `M${x - 1} ${y(top)}h3v${h}h-3z`;
    if (hollow) white += `M${x} ${y(top) + 1}h1v${h - 2}h-1z`;
  });
  out += `<g shape-rendering="crispEdges"><path d="${black}"/><path d="${white}" fill="#fff"/>`;

  // frame and axes
  out += `<path d="M1.5 ${bottom}V1.500H${right}" fill="none" stroke="#000"/>`;
  out += `<path d="M1 ${bottom + 0.5}H${right + 0.5}V1" fill="none" stroke="#000"/>`;
  out += `<path d="M2 ${bottom}v-5l5 5zM1143 2h10l-5 5z" fill="#b0b0b0"/>`;
  for (let pip = 0; pip <= 45; pip += 5) out += hLine(right, right + 4, y(pip), 'stroke="#000"');
  times.forEach((t, i) => { out += vLine(2 + i * 64, bottom, bottom + 4, 'stroke="#000"'); });
  out += `<rect x="${right + 2}" y="${y(22) - 6}" width="35" height="12"/></g>`;

  for (let pip = 0; pip <= 45; pip += 5) {
    out += `<text x="${right + 6}" y="${y(pip) + 4}">${(1.126 - pip / 10000).toFixed(4)}</text>`;
  }
  out += `<text class="now" x="${right + 6}" y="${y(22) + 4}">1.1238</text>`;
  times.forEach((t, i) => {
    out += `<text x="${1 + i * 64}" y="${bottom + 13}">${t}</text>`;
  });

  out += '<path d="M5 8h7l-3.5 4z"/>';
  out += '<text x="17" y="13">EURUSD,M5&#160;&#160; 1.1238 1.1238 1.1237 1.1238</text>';
  out += '<text class="news" x="6" y="26">No news</text>';
  out += `<text x="${right - 18}" y="14" text-anchor="end">Sniper_Robot_Automatic_Version_II_fix</text>`;
  out += `<g transform="translate(${right - 11} 11)" fill="none" stroke="#000"><circle r="5"/><path d="M-3 1C-2 4 2 4 3 1M-2-2v1M2-2v1"/></g>`;

  chartEl.innerHTML = `<svg xmlns="http://www.w3.org/2000/svg">${out}</svg>`;
};

draw();
window.addEventListener('resize', draw);
```
